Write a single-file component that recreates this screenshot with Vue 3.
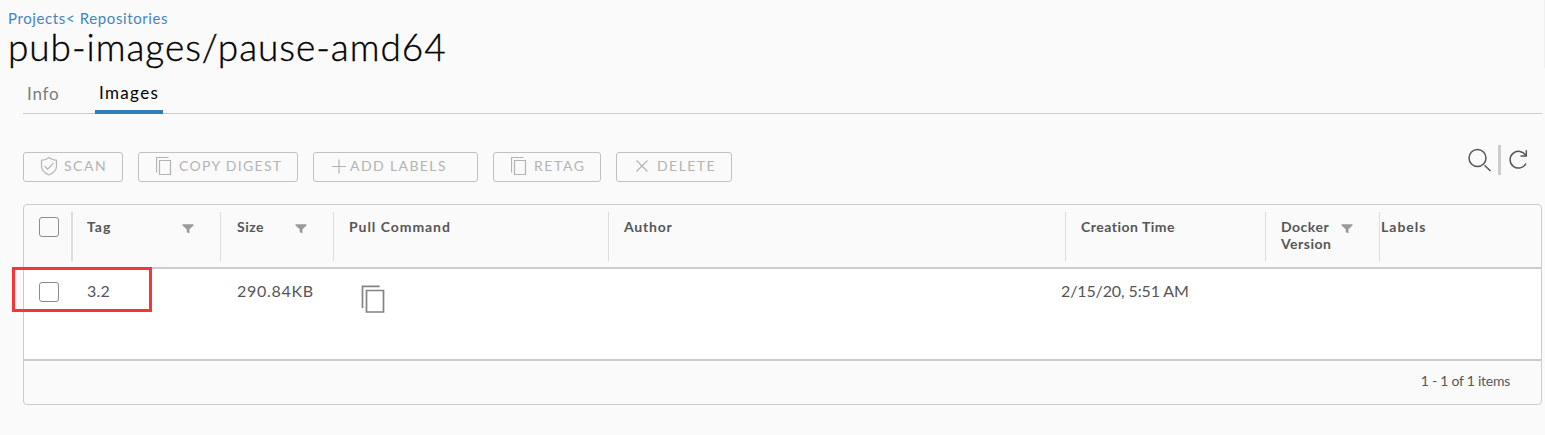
<script setup>
const columns = [
  { key: 'tag', label: 'Tag', filter: true },
  { key: 'size', label: 'Size', filter: true },
  { key: 'pull', label: 'Pull Command' },
  { key: 'author', label: 'Author' },
  { key: 'created', label: 'Creation Time' },
  { key: 'docker', label: 'Docker Version', filter: true },
  { key: 'labels', label: 'Labels' },
]
const actions = [
  { key: 'scan', label: 'SCAN' },
  { key: 'copy', label: 'COPY DIGEST' },
  { key: 'add', label: 'ADD LABELS' },
  { key: 'retag', label: 'RETAG' },
  { key: 'delete', label: 'DELETE' },
]
</script>

<template>
  <main class="page">
    <nav class="crumbs"><a>Projects</a><a>&lt; Repositories</a></nav>
    <h1 class="title">pub-images/pause-amd64</h1>
    <div class="tabs">
      <button class="tab info">Info</button>
      <button class="tab images active">Images</button>
    </div>

    <div class="toolbar">
      <button v-for="a in actions" :key="a.key" class="btn" :class="a.key">
        <svg v-if="a.key === 'scan'" width="18" height="20" viewBox="0 0 18 20">
          <path d="M9 .8C11.500 2.500 13.800 3.100 16.500 3.300V9C16.500 13.500 12.500 16.500 9 18C5.500 16.500 1.500 13.500 1.500 9V3.300C4.200 3.100 6.500 2.500 9 .8Z" />
          <path d="M4.500 9L7.700 12.200L13.500 6.200" />
        </svg>
        <svg v-else-if="a.key === 'copy' || a.key === 'retag'" width="17" height="20" viewBox="0 0 17 20">
          <path d="M12.500 .5H.5V15.500M3.500 3.500H14.500V17.500H3.500Z" />
        </svg>
        <svg v-else-if="a.key === 'add'" width="16" height="20" viewBox="0 0 16 20">
          <path d="M1 9.500H15M8 2.500V16.500" />
        </svg>
        <svg v-else width="14" height="20" viewBox="0 0 14 20">
          <path d="M1.500 3.500L12.500 14.500M12.500 3.500L1.500 14.500" />
        </svg>
        <span>{{ a.label }}</span>
      </button>
      <div class="tools">
        <svg width="24" height="26" viewBox="0 0 24 26">
          <circle cx="9.500" cy="10" r="8.500" />
          <path d="M16.500 17.200L22.500 23" />
        </svg>
        <i class="bar"></i>
        <svg width="20" height="22" viewBox="0 0 20 22">
          <path d="M16.800 7.500A8.400 8.400 0 1 0 17 15.500" />
          <path d="M17.300 2.300V8H11.500" />
        </svg>
      </div>
    </div>

    <section class="grid">
      <div class="row head">
        <div class="check"><i class="box"></i></div>
        <div v-for="c in columns" :key="c.key" class="cell" :class="c.key">
          <span class="label">{{ c.label }}</span>
          <svg v-if="c.filter" class="filter" width="12" height="10" viewBox="0 0 12 10">
            <path d="M.5 .3H11.500V1.500L7.500 5.300V9.300L4.700 8.300V5.300L.5 1.500Z" />
          </svg>
        </div>
      </div>
      <div class="row body">
        <div class="check"><i class="box"></i></div>
        <div class="cell tag">3.2</div>
        <div class="cell size">290.84KB</div>
        <div class="cell pull">
          <svg class="copyicon" width="25" height="29" viewBox="0 0 25 29">
            <path d="M18.700 1.300H1.500V23M5.500 5.500H22.500V27H5.500Z" />
          </svg>
        </div>
        <div class="cell author"></div>
        <div class="cell created">2/15/20, 5:51 AM</div>
        <div class="cell docker"></div>
        <div class="cell labels"></div>
      </div>
      <div class="foot"><span>1 - 1 of 1 items</span></div>
      <div class="highlight"></div>
    </section>
    <i class="edge"></i>
  </main>
</template>

<style>
body { background: #fafafa; overflow: hidden; }
</style>

<style scoped>
.page {
  position: relative;
  box-sizing: border-box;
  width: 1545px;
  height: 435px;
  padding: 9px 3px 0 8px;
  background: #fafafa;
  color: #565656;
  font-family: Lato, "Open Sans", sans-serif;
}
.edge { position: absolute; top: 0; right: 0; width: 1px; height: 68px; background: #f0f0f0; }
.crumbs { height: 17px; font-size: 15px; line-height: 18px; letter-spacing: .61px; color: #4585bf; white-space: pre; }
.title { margin: 0; height: 40px; font-size: 37px; line-height: 41px; font-weight: 300; letter-spacing: .94px; color: #000; -webkit-text-stroke: .35px #000; white-space: nowrap; }
.tabs { display: flex; box-sizing: border-box; height: 48px; margin-left: 15px; padding-top: 15px; border-bottom: 1px solid #ccc; }
.tab { box-sizing: border-box; height: 33px; padding: 0 0 7px 4px; border: 0; background: none; font: 400 17px/24px Lato, sans-serif; text-align: left; color: #7c7c7c; }
.info { width: 42px; height: 32px; margin-right: 30px; letter-spacing: .8px; }
.images { width: 68px; padding-bottom: 5px; letter-spacing: 1.35px; color: #000; border-bottom: 4px solid #2f7dbb; }

.toolbar { display: flex; gap: 15px; margin: 38px 0 0 15px; height: 30px; }
.btn { display: flex; align-items: center; box-sizing: border-box; height: 30px; padding: 0; border: 1px solid #c1c1c1; border-radius: 3px; background: none; color: #b4b4b4; font: 400 14px/20px Lato, sans-serif; white-space: nowrap; }
.btn svg { flex: none; fill: none; stroke: #b4b4b4; stroke-width: 1.2; }
.btn span { margin-top: -2px; letter-spacing: 1.3px; }
.scan { width: 100px; padding-left: 16px; }
.scan span { margin-left: 6px; letter-spacing: 1.5px; }
.copy { width: 160px; padding-left: 17px; }
.copy span { margin-left: 6px; }
.add { width: 165px; padding-left: 17px; }
.add span { margin-left: 3px; letter-spacing: 1.4px; }
.retag { width: 108px; padding-left: 17px; }
.retag span { margin-left: 6px; letter-spacing: 1.6px; }
.delete { width: 116px; padding-left: 18px; }
.delete span { margin-left: 8px; letter-spacing: 1.45px; }
.tools { display: flex; margin: -7px 13px 0 auto; height: 30px; }
.tools svg { fill: none; stroke: #565656; stroke-width: 1.5; margin-top: 3px; }
.bar { width: 3px; height: 30px; margin: 0 8px 0 6px; background: #ccc; }

.grid { position: relative; box-sizing: border-box; width: 1519px; height: 201px; margin: 22px 0 0 15px; border: 1px solid #ccc; border-radius: 4px; }
.row { display: grid; grid-template-columns: 47px 149px 113px 275px 457px 200px 114px 1fr; box-sizing: border-box; }
.head { height: 64px; padding-top: 7px; border-bottom: 2px solid #ccc; font-size: 14px; line-height: 17px; font-weight: 700; }
.head .cell { display: flex; box-sizing: border-box; height: 49px; padding: 6px 0 0 15px; border-left: 1px solid #ddd; letter-spacing: .5px; }
.head .tag { border-left-width: 2px; padding-left: 14px; letter-spacing: 1px; }
.head .size { padding-left: 16px; }
.head .pull { letter-spacing: .95px; }
.head .author { letter-spacing: .8px; }
.head .label { flex: none; }
.head .docker .label { width: 54px; }
.head .labels { padding-left: 1px; letter-spacing: 1px; }
.filter { flex: none; margin-top: 6px; fill: #9a9a9a; }
.tag .filter, .size .filter { margin-left: auto; }
.tag .filter { margin-right: 26px; }
.size .filter { margin-right: 26px; }
.docker .filter { margin-left: 6px; }
.box { display: block; box-sizing: border-box; width: 20px; height: 20px; margin: 5px 0 0 15px; border: 1px solid #8c8c8c; border-radius: 3px; }
.body { height: 90px; padding-top: 8px; background: #fff; border: 0; font-size: 16px; line-height: 28px; }
.body .cell { padding-left: 16px; letter-spacing: .2px; white-space: nowrap; }
.body .size { padding-left: 17px; letter-spacing: .7px; }
.body .created { margin-left: -20px; letter-spacing: -.12px; }
.copyicon { display: block; margin: 8px 0 0 12px; fill: none; stroke: #838383; stroke-width: 1.7; }
.foot { display: flex; justify-content: flex-end; box-sizing: border-box; height: 45px; padding-right: 31px; border-top: 2px solid #ccc; font-size: 14px; line-height: 40px; letter-spacing: -.25px; }
.highlight { position: absolute; box-sizing: border-box; left: -12px; top: 62px; width: 140px; height: 45px; border: 3px solid #f83535; }
</style>
